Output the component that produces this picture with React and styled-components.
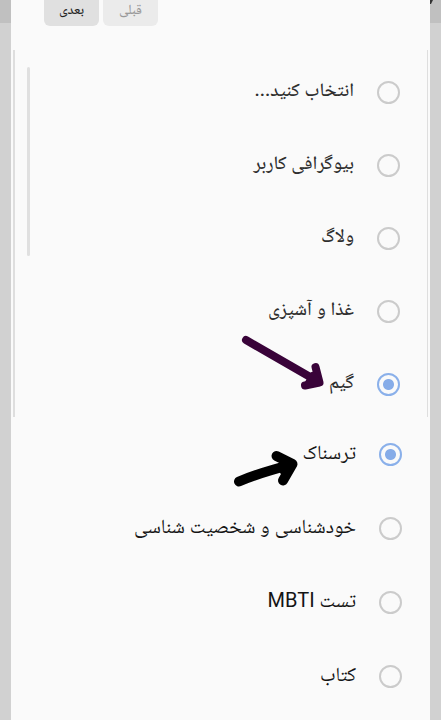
import { useState } from "react";
import styled, { createGlobalStyle } from "styled-components";

const GlobalStyle = createGlobalStyle`
  * {
    box-sizing: border-box;
  }

  body {
    margin: 0;
    background: #d1d1d1;
    font-family: Roboto, "Noto Naskh Arabic", "Noto Sans", "DejaVu Sans", sans-serif;
  }
`;

const Backdrop = styled.div`
  position: relative;
  min-height: 100vh;
  padding: 0 11px;
  overflow: hidden;
  background: linear-gradient(#c0c0c0 23px, #d1d1d1 23px);
`;

const Panel = styled.main`
  position: relative;
  min-height: 100vh;
  padding: 0 2px;
  background: #fafafa;
`;

const Pager = styled.nav`
  display: flex;
  justify-content: flex-end;
  gap: 4px;
  height: 50px;
  padding-left: 31px;
`;

const PagerButton = styled.button`
  width: 55px;
  height: 34px;
  margin-top: -8px;
  padding: 0;
  border: 0;
  border-radius: 6px;
  background: ${({ disabled }) => (disabled ? "#ebebeb" : "#e0e0e0")};
  color: ${({ disabled }) => (disabled ? "#999999" : "#222222")};
  font-family: inherit;
  font-size: 14px;
  font-weight: 500;
  line-height: 20px;
`;

const OptionList = styled.div`
  position: relative;
  display: flex;
  flex-direction: column;
  gap: ${({ $framed }) => ($framed ? "11px" : "12px")};
  padding: ${({ $framed }) => ($framed ? "11px 27px 2px" : "6px 26px 0")};
  border-left: ${({ $framed }) => ($framed ? "2px solid #dedede" : "0")};
  border-right: ${({ $framed }) => ($framed ? "1px solid #dedede" : "0")};
`;

const ScrollThumb = styled.span`
  position: absolute;
  top: 17px;
  left: 12px;
  width: 3px;
  height: 189px;
  border-radius: 2px;
  background: #e0e0e0;
`;

const Option = styled.label`
  display: flex;
  align-items: center;
  gap: 23px;
  height: 62px;
  color: ${({ $soft }) => ($soft ? "#2e2e2e" : "#141414")};
  font-size: ${({ $soft }) => ($soft ? "19px" : "20px")};
  font-weight: ${({ $soft }) => ($soft ? 500 : 400)};
  line-height: 28px;
`;

const OptionText = styled.span`
  padding-bottom: 4px;
`;

const Radio = styled.input`
  appearance: none;
  flex: none;
  width: 23px;
  height: 23px;
  margin: 0;
  border: 2px solid #cbcbcb;
  border-radius: 50%;

  &:checked {
    border-color: #8ab0ea;
    background: radial-gradient(circle, #86ace8 5px, transparent 6px);
  }
`;

const Marks = styled.svg`
  position: absolute;
  top: 330px;
  right: 100px;
  width: 120px;
  height: 170px;
  pointer-events: none;
`;

const CornerMark = styled.svg`
  position: absolute;
  top: 0;
  right: 8px;
  width: 3px;
  height: 5px;
`;

const groups = [
  {
    name: "category",
    framed: true,
    selected: "گیم",
    options: [
      "انتخاب کنید...",
      "بیوگرافی کاربر",
      "ولاگ",
      "غذا و آشپزی",
      "گیم",
    ],
  },
  {
    name: "more-category",
    framed: false,
    selected: "ترسناک",
    options: ["ترسناک", "خودشناسی و شخصیت شناسی", "تست MBTI", "کتاب"],
  },
];

const OptionGroup = ({ name, framed, selected, options }) => {
  const [value, setValue] = useState(selected);

  return (
    <OptionList role="radiogroup" $framed={framed}>
      {framed && <ScrollThumb />}
      {options.map((option) => (
        <Option key={option} $soft={framed}>
          <Radio
            type="radio"
            name={name}
            checked={value === option}
            onChange={() => setValue(option)}
          />
          <OptionText>{option}</OptionText>
        </Option>
      ))}
    </OptionList>
  );
};

const Arrows = () => (
  <Marks
    viewBox="0 0 120 170"
    fill="none"
    strokeLinecap="round"
    strokeLinejoin="round"
    aria-hidden="true"
  >
    <g stroke="#390339" strokeWidth="8">
      <path d="M25 10 97 51.500" />
      <path d="M94.500 37 98.500 52.500 84 55.500" />
      <path d="m92 46 4 6-8 1z" />
    </g>
    <g stroke="#000" strokeWidth="10">
      <path d="M18 151.500C35 144 50 140 69 135" />
      <path d="M55.500 126 71.500 134 62 150.500" />
      <path d="m64 134 5 1-6 5z" />
    </g>
  </Marks>
);

export default function App() {
  return (
    <Backdrop dir="rtl" lang="fa">
      <GlobalStyle />
      <Panel>
        <Pager>
          <PagerButton disabled>قبلی</PagerButton>
          <PagerButton>بعدی</PagerButton>
        </Pager>
        {groups.map((group) => (
          <OptionGroup key={group.name} {...group} />
        ))}
      </Panel>
      <Arrows />
      <CornerMark viewBox="0 0 3 5" aria-hidden="true">
        <path d="M0 0h3L1 4H0z" fill="#333" />
      </CornerMark>
    </Backdrop>
  );
}
